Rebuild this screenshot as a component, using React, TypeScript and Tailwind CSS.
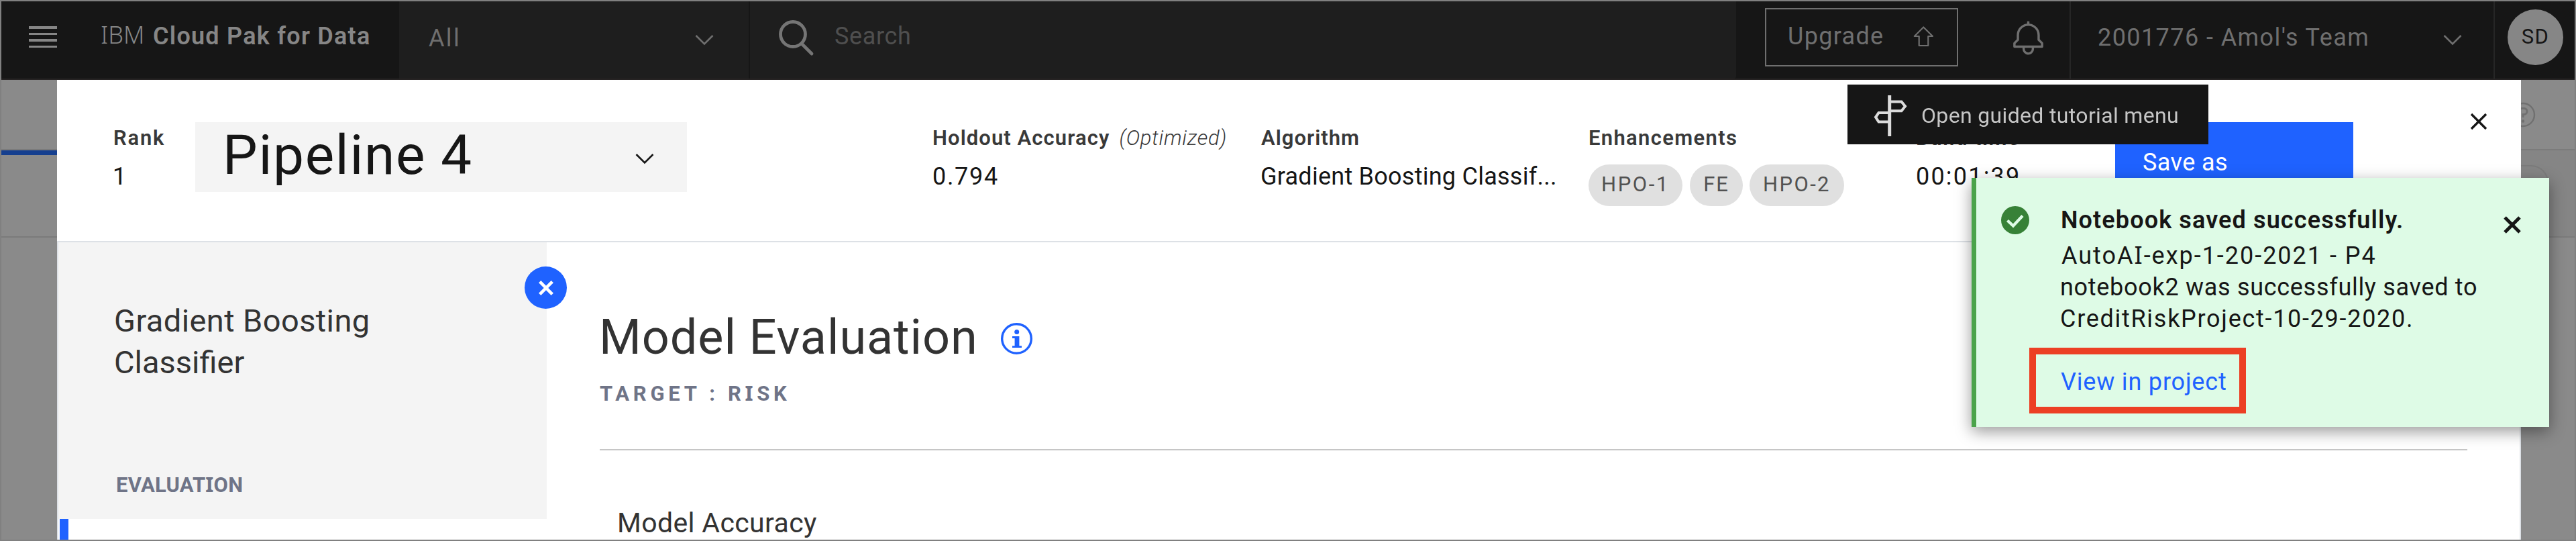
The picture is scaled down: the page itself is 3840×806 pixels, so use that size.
import type { ReactNode } from "react";

function Chevron({ className }: { className: string }) {
  return (
    <svg className={className} width="28" height="17" viewBox="0 0 28 17" fill="none" stroke="currentColor" strokeWidth="2.6">
      <path d="M1.5 2 14 14.5 26.5 2" />
    </svg>
  );
}

function Cross({ className, thick }: { className: string; thick: number }) {
  return (
    <svg className={className} viewBox="0 0 26 26" fill="none" stroke="currentColor" strokeWidth={thick}>
      <path d="M2 2 24 24M24 2 2 24" />
    </svg>
  );
}

function SerifI() {
  return <span className="font-['Noto_Sans',sans-serif] leading-none">I</span>;
}

function Header() {
  return (
    <header className="flex h-[117px] shrink-0 border-b-2 border-[#262323] bg-[#161616] text-[36px] leading-[48px]">
      <div className="flex w-[593px] items-start pl-[41px] text-[#868686]">
        <div className="mt-[37px] flex w-[42px] flex-col gap-[6px]">
          <span className="h-[3.5px] bg-[#868686]" />
          <span className="h-[3.5px] bg-[#868686]" />
          <span className="h-[3.5px] bg-[#868686]" />
          <span className="h-[3.5px] bg-[#868686]" />
        </div>
        <span className="mt-[26px] ml-[65px] w-[78px] font-['Noto_Sans',sans-serif] font-light">IBM</span>
        <span className="mt-[28px] font-semibold tracking-[1.25px] whitespace-nowrap">Cloud Pak for Data</span>
      </div>
      <div className="flex w-[523px] items-start border-r-2 border-[#161616] bg-[#1e1e1e] pl-[44px] text-[#6f6f6f]">
        <span className="mt-[31px] w-[397px] tracking-[2.38px]">All</span>
        <Chevron className="mt-[49px]" />
      </div>
      <div className="flex w-[1470px] items-start rounded-br bg-[#1e1e1e] pl-[42px]">
        <svg className="mt-[26px] text-[#757575]" width="56" height="56" viewBox="0 0 56 56" fill="none" stroke="currentColor" strokeWidth="4.8">
          <circle cx="22" cy="23" r="18.5" />
          <path d="M35 37 50 52" strokeLinecap="round" />
        </svg>
        <span className="mt-[28px] ml-[28px] tracking-[0.65px] text-[#4f4f4f]">Search</span>
      </div>
      <div className="flex grow items-start text-[#6f6f6f]">
        <div className="mt-[10px] ml-[43px] flex h-[87px] w-[288px] items-start border-2 border-[#6f6f6f] pl-[32px]">
          <span className="mt-[16px] w-[187px] tracking-[1.31px]">Upgrade</span>
          <svg className="mt-[24px]" width="31" height="32" viewBox="0 0 31 32" fill="none" stroke="currentColor" strokeWidth="2.2">
            <path d="M15.3 2.5 1.8 16H8.7V30H22.3V16H29L15.3 2.5Z" strokeLinejoin="round" />
          </svg>
        </div>
        <svg className="mt-[28px] ml-[77px]" width="55" height="55" viewBox="0 0 32 32" fill="currentColor">
          <path d="M28.707 19.293 26 16.586V13a10.014 10.014 0 0 0-9-9.95V1h-2v2.05A10.014 10.014 0 0 0 6 13v3.586l-2.707 2.707A1 1 0 0 0 3 20v3a1 1 0 0 0 1 1h7v.777a5.152 5.152 0 0 0 4.5 5.199A5.006 5.006 0 0 0 21 25v-1h7a1 1 0 0 0 1-1v-3a1 1 0 0 0-.293-.707ZM19 25a3 3 0 0 1-6 0v-1h6Zm8-3H5v-1.586l2.707-2.707A1 1 0 0 0 8 17v-4a8 8 0 0 1 16 0v4a1 1 0 0 0 .293.707L27 20.414Z" />
        </svg>
        <div className="ml-[34px] flex h-[115px] w-[634px] items-start border-x-2 border-[#262626] pl-[40px]">
          <span className="mt-[30px] w-[515px] tracking-[1.42px] whitespace-nowrap">2001776 - Amol's Team</span>
          <Chevron className="mt-[49px]" />
        </div>
        <div className="mt-[12px] ml-[19px] flex size-[83px] items-center justify-center rounded-full bg-[#868686] pb-[2px] text-[31px] tracking-[1.5px] text-[#161616]">
          SD
        </div>
      </div>
    </header>
  );
}

function Field({ label, value, className }: { label: ReactNode; value: ReactNode; className: string }) {
  return (
    <div className={"flex shrink-0 flex-col pt-[67px] pl-px " + className}>
      <div className="flex h-[40px] text-[31px] leading-[40px] font-semibold whitespace-nowrap text-[#393939]">{label}</div>
      {value}
    </div>
  );
}

function Tag({ className, children }: { className: string; children: string }) {
  return (
    <span className={"flex h-[62px] items-center justify-center rounded-full bg-[#e0e0e0] pb-[3px] text-[31px] leading-[40px] whitespace-nowrap text-[#525252] " + className}>
      {children}
    </span>
  );
}

function SummaryBar() {
  return (
    <div className="flex h-[242px] items-start border-b-2 border-[#dde1e6] pl-[83px] text-[36px] leading-[48px] text-[#161616]">
      <Field
        className="w-[123px]"
        label={<span className="tracking-[1.78px]">Rank</span>}
        value={<span className="mt-[13px] -ml-px">1</span>}
      />
      <div className="mt-[63px] flex h-[104px] w-[733px] shrink-0 items-center bg-[#f4f4f4] pl-[41px]">
        <span className="w-[615px] pb-[7px] text-[82px] leading-[98px] tracking-[1.65px]">Pipeline 4</span>
        <Chevron className="mt-[4px]" />
      </div>
      <Field
        className="ml-[365px] w-[489px]"
        label={
          <>
            <span className="tracking-[1.08px]">Holdout Accuracy</span>
            <span className="ml-[14px] font-light tracking-[0.68px] italic">(Optimized)</span>
          </>
        }
        value={<span className="mt-[13px] tracking-[1.7px]">0.794</span>}
      />
      <Field
        className="w-[489px]"
        label={<span className="pl-px tracking-[1.02px]">Algorithm</span>}
        value={<span className="mt-[13px] tracking-[0.25px] whitespace-nowrap">Gradient Boosting Classif...</span>}
      />
      <Field
        className="w-[488px]"
        label={<span className="tracking-[1.34px]">Enhancements</span>}
        value={
          <div className="mt-[19px] flex">
            <Tag className="w-[140px] tracking-[2.6px]">HPO-1</Tag>
            <Tag className="ml-[11px] w-[79px] tracking-[1.87px]">FE</Tag>
            <Tag className="ml-[10px] w-[141px] tracking-[2.36px]">HPO-2</Tag>
          </div>
        }
      />
      <Field
        className="w-[298px]"
        label={<span className="tracking-[1.48px]">Build time</span>}
        value={<span className="mt-[13px] tracking-[2.2px]">00:01:39</span>}
      />
      <button className="mt-[63px] flex h-[104px] w-[355px] shrink-0 items-start bg-[#1f62ff] pt-[36px] pl-[41px] tracking-[0.42px] text-white">
        Save as
      </button>
      <Cross className="mt-[49px] ml-[174px] size-[26px]" thick={3.4} />
    </div>
  );
}

function Sidebar() {
  return (
    <aside className="relative w-[728px] shrink-0">
      <div className="h-[412px] bg-[#f4f4f4] pt-[86px] pl-[83px]">
        <p className="text-[47px] leading-[62px] text-[#333333]">
          <span className="tracking-[0.4px]">Gradient Boosting</span>
          <br />
          Classifier
        </p>
        <p className="mt-[132px] ml-[3px] text-[31px] leading-[40px] font-bold tracking-[0.2px] text-[#6f7487]">
          EVALUAT<SerifI />ON
        </p>
      </div>
      <div className="ml-[2px] h-[31px] w-[13px] bg-[#1f62ff]" />
      <div className="absolute top-[36px] left-[695px] flex size-[63px] items-center justify-center rounded-full bg-[#1f62ff] text-white">
        <Cross className="size-[22px]" thick={5.5} />
      </div>
    </aside>
  );
}

function Evaluation() {
  return (
    <main className="grow pt-[102px] pl-[78px] text-[#333333]">
      <div className="flex items-start">
        <h1 className="w-[599px] text-[72px] leading-[80px] tracking-[0.93px] whitespace-nowrap">Model Evaluation</h1>
        <svg className="mt-[18px] text-[#1f62ff]" width="47" height="47" viewBox="0 0 47 47" fill="currentColor">
          <circle cx="23.5" cy="23.5" r="21.8" fill="none" stroke="currentColor" strokeWidth="3.4" />
          <circle cx="23.7" cy="13.4" r="3.5" />
          <path d="M17 20h10.4v14.2H31V37H17v-2.8h3.6V23H17Z" />
        </svg>
      </div>
      <p className="mt-[24px] ml-px text-[31px] leading-[40px] font-bold tracking-[5.7px] text-[#6f7487]">
        TARGET : R<SerifI />SK
      </p>
      <div className="mt-[62px] ml-px h-[2px] w-[2784px] bg-[#c6c6c6]" />
      <p className="mt-[84px] ml-[27px] text-[41px] leading-[48px] tracking-[0.36px]">Model Accuracy</p>
    </main>
  );
}

function GuidedMenu() {
  return (
    <div className="absolute top-[124px] left-[2752px] flex h-[89px] w-[538px] items-start bg-[#161616] text-[#c6c6c6]">
      <svg className="mt-[14px] ml-[39px] text-[#dcdcdc] blur-[0.5px]" width="52" height="66" viewBox="0 0 52 66" fill="none" stroke="currentColor" strokeWidth="4">
        <path d="M23.7 2V63" strokeWidth="5" />
        <path d="M25 11.5H41.5L47 18.3 41.5 25.3H25M23 28H7.5L3 34.5 7.5 41.5H23" />
      </svg>
      <span className="mt-[26px] ml-[19px] text-[32px] leading-[40px] tracking-[0.34px] whitespace-nowrap blur-[0.5px]">
        Open guided tutorial menu
      </span>
    </div>
  );
}

function Toast() {
  return (
    <div className="absolute top-[263px] left-[2937px] flex h-[371px] w-[861px] items-start border-l-[7px] border-[#4ba34b] bg-[#defbe6] pl-[37px] text-[36px] leading-[47px] text-[#161616] shadow-[0_7px_22px_rgba(0,0,0,0.4)]">
      <svg className="mt-[42px] shrink-0" width="42" height="42" viewBox="0 0 42 42" fill="none">
        <circle cx="21" cy="21" r="21" fill="#378137" />
        <path d="M9.5 21.5 18 29.5 32 14.5" stroke="#defbe6" strokeWidth="4.4" />
      </svg>
      <div className="ml-[46px] w-[661px] shrink-0 pt-[40px] whitespace-nowrap">
        <p className="h-[47px] pl-px font-semibold tracking-[1.12px]">Notebook saved successfully.</p>
        <p className="mt-[6px] h-[47px] pl-[2px] tracking-[1.98px]">
          AutoA<SerifI />-exp-1-20-2021 - P4
        </p>
        <p className="h-[47px] tracking-[0.7px]">notebook2 was successfully saved to</p>
        <p className="h-[47px] tracking-[1.71px]">CreditRiskProject-10-29-2020.</p>
        <div className="mt-[19px] -ml-[46px] h-[98px] w-[323px] border-[10px] border-[#ec3f24] pt-[18px] pl-[37px]">
          <a className="tracking-[0.82px] text-[#1f62ff]">View in project</a>
        </div>
      </div>
      <Cross className="mt-[57px] size-[26px] shrink-0" thick={5} />
    </div>
  );
}

export default function App() {
  return (
    <div className="relative flex h-[806px] w-full flex-col overflow-hidden border-2 border-[#808080] bg-[#8a8a8a] font-['Roboto',sans-serif]">
      <Header />
      <div className="flex grow">
        <div className="flex w-[83px] shrink-0 flex-col">
          <div className="h-[105px] border-b-2 border-[#7b7b7b]" />
          <div className="h-[7px] bg-[#153f8f]" />
          <div className="h-[123px] border-b-2 border-[#7b7b7b]" />
        </div>
        <div className="flex w-[3673px] shrink-0 flex-col bg-white">
          <SummaryBar />
          <div className="flex grow border-x-2 border-[#dde1e6]">
            <Sidebar />
            <Evaluation />
          </div>
        </div>
        <div className="flex w-[80px] shrink-0 flex-col overflow-hidden">
          <div className="h-[105px] border-b-2 border-[#7b7b7b] pt-[33px]">
            <svg className="-ml-[16px] text-[#707070]" width="38" height="38" viewBox="0 0 38 38" fill="none" stroke="currentColor" strokeWidth="2.4">
              <circle cx="19" cy="19" r="17" />
              <path d="M13 14.5c0-3 2-5 4.5-5h3c2.7 0 4.500 2 4.500 4.500s-2 4.500-4.500 4.500H19V23" strokeWidth="3" />
              <circle cx="19" cy="28.5" r="2.2" fill="currentColor" stroke="none" />
            </svg>
          </div>
          <div className="h-[130px] border-b-2 border-[#7b7b7b] bg-[#858585] pt-[22px]">
            <div className="-ml-[40px] h-[52px] w-[81px] rounded-[26px] border-2 border-[#7b7b7b]" />
          </div>
        </div>
      </div>
      <GuidedMenu />
      <Toast />
    </div>
  );
}
